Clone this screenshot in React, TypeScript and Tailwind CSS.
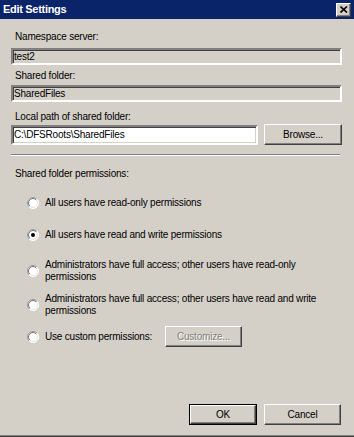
import React from "react";

const raised =
  "border border-t-white border-l-white border-r-[#404040] border-b-[#404040] shadow-[inset_-1px_-1px_0_#808080,inset_1px_1px_0_#d4d0c8] bg-[#d4d0c8]";
const sunken =
  "border-2 border-t-[#808080] border-l-[#808080] border-r-white border-b-white shadow-[inset_1px_1px_0_#404040,inset_-1px_-1px_0_#d4d0c8]";

function Radio({ checked, id }: { checked?: boolean; id: string }) {
  return (
    <svg width="12" height="12" viewBox="0 0 12 12" className="shrink-0">
      <defs>
        <linearGradient id={`o${id}`} x1="0" y1="0" x2="1" y2="1">
          <stop offset="0.5" stopColor="#9a9a9a" />
          <stop offset="0.5" stopColor="#ffffff" />
        </linearGradient>
        <linearGradient id={`i${id}`} x1="0" y1="0" x2="1" y2="1">
          <stop offset="0.5" stopColor="#707070" />
          <stop offset="0.5" stopColor="#e4e2dc" />
        </linearGradient>
      </defs>
      <circle cx="6" cy="6" r="5.5" fill="white" stroke={`url(#o${id})`} strokeWidth="1" />
      <circle cx="6" cy="6" r="4.5" fill="white" stroke={`url(#i${id})`} strokeWidth="1" />
      {checked && <circle cx="6" cy="6" r="2" fill="black" />}
    </svg>
  );
}

export default function App() {
  return (
    <div className="w-[354px] h-[437px] bg-[#d4d0c8] flex flex-col font-['Liberation_Sans',Arial,sans-serif] text-[10px] tracking-[-0.2px] leading-[13px] text-black overflow-hidden">
      {/* Title bar */}
      <div className="h-[19px] bg-[#0a246a] flex items-center justify-between pl-[3px] pr-[3px] shrink-0">
        <span className="text-white font-bold text-[11px] tracking-[-0.3px]">Edit Settings</span>
        <div className={`w-[15px] h-[14px] flex items-center justify-center ${raised}`}>
          <svg width="8" height="7" viewBox="0 0 8 7">
            <path d="M0.5 0.5 L7 6.5 M7 0.5 L0.5 6.5" stroke="black" strokeWidth="1.6" />
          </svg>
        </div>
      </div>

      {/* Content */}
      <div className="flex-1 flex flex-col pl-[11px] pr-[12px] pb-[10px]">
        <div className="mt-[11px] pl-[4px]">Namespace server:</div>
        <div className={`mt-[5px] h-[17px] flex items-center pl-[1px] ${sunken}`}>test2</div>

        <div className="mt-[4px] pl-[4px]">Shared folder:</div>
        <div className={`mt-[3px] h-[17px] flex items-center pl-[1px] ${sunken}`}>SharedFiles</div>

        <div className="mt-[8px] pl-[4px]">Local path of shared folder:</div>
        <div className="mt-[1px] flex items-center justify-between h-[21px]">
          <div className={`w-[247px] h-[20px] bg-white flex items-center pl-[1px] ${sunken}`}>
            C:\DFSRoots\SharedFiles
          </div>
          <div className={`w-[78px] h-[21px] flex items-center justify-center ${raised}`}>Browse...</div>
        </div>

        <div className="mt-[9px] mr-[2px] h-[2px] border-t border-t-[#808080] border-b border-b-white" />

        <div className="mt-[11px] pl-[4px]">Shared folder permissions:</div>

        <div className="flex flex-col pl-[16px]">
          <div className="mt-[16px] flex items-center gap-[6px]">
            <Radio id="r1" />
            <span>All users have read-only permissions</span>
          </div>
          <div className="mt-[19px] flex items-center gap-[6px]">
            <Radio id="r2" checked />
            <span>All users have read and write permissions</span>
          </div>
          <div className="mt-[18px] flex items-center gap-[6px]">
            <Radio id="r3" />
            <span className="leading-[12px]">
              Administrators have full access; other users have read-only
              <br />
              permissions
            </span>
          </div>
          <div className="mt-[10px] flex items-center gap-[6px]">
            <Radio id="r4" />
            <span className="leading-[12px]">
              Administrators have full access; other users have read and write
              <br />
              permissions
            </span>
          </div>
          <div className="mt-[9px] flex items-center">
            <Radio id="r5" />
            <span className="ml-[6px] w-[104px] shrink-0 whitespace-nowrap">Use custom permissions:</span>
            <div
              className={`ml-[16px] w-[77px] h-[21px] shrink-0 flex items-center justify-center text-[#808080] [text-shadow:1px_1px_0_#ffffff] ${raised}`}
            >
              Customize...
            </div>
          </div>
        </div>

        <div className="flex-1" />

        <div className="flex justify-end gap-[7px] pr-[1px]">
          <div className="w-[68px] h-[21px] border border-black">
            <div className={`w-full h-full flex items-center justify-center ${raised}`}>OK</div>
          </div>
          <div className={`w-[77px] h-[21px] flex items-center justify-center ${raised}`}>Cancel</div>
        </div>
      </div>

      <div className="h-[1px] bg-[#808080] shrink-0" />
      <div className="h-[1px] bg-[#404040] shrink-0" />
    </div>
  );
}
